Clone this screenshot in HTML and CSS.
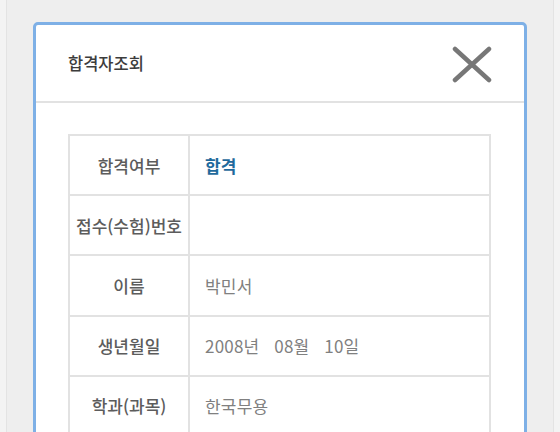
FILE: index.html
```html
<!DOCTYPE html>
<html lang="ko">
  <head>
    <title>합격자조회</title>
    <meta charset="utf-8">
    <meta name="viewport" content="width=device-width, initial-scale=1.0">
    <link rel="stylesheet" href="styles.css">
  </head>
  <body>
    <div class="page">
      <!-- Result Modal -->
      <div class="modal">
        <div class="modal-header">
          <h3>합격자조회</h3>
          <button class="close-button" aria-label="닫기">
            <svg width="40" height="37" viewBox="0 0 40 37">
              <line x1="3" y1="3" x2="37" y2="34" />
              <line x1="37" y1="3" x2="3" y2="34" />
            </svg>
          </button>
        </div>
        <div class="modal-body">
          <table class="result-table">
            <tr>
              <th>합격여부</th>
              <td class="pass">합격</td>
            </tr>
            <tr>
              <th>접수(수험)번호</th>
              <td></td>
            </tr>
            <tr>
              <th>이름</th>
              <td>박민서</td>
            </tr>
            <tr>
              <th>생년월일</th>
              <td>2008년&nbsp;&nbsp;&nbsp;08월&nbsp;&nbsp;&nbsp;10일</td>
            </tr>
            <tr>
              <th>학과(과목)</th>
              <td>한국무용</td>
            </tr>
          </table>
        </div>
      </div>
    </div>
  </body>
</html>
```

FILE: styles.css
```css
* {
  margin: 0;
  padding: 0;
  box-sizing: border-box;
}

:root {
  --page-bg: #eeeeee;
  --modal-border: #7eb0e6;
  --line: #e2e2e2;
  --text-title: #3c3c3c;
  --text-label: #5c5c5c;
  --text-value: #808080;
  --accent-blue: #1f6a9c;
}

body {
  font-family: "Noto Sans CJK KR", "Noto Sans", sans-serif;
  background: #f3f3f3;
  height: 432px;
  overflow: hidden;
}

.page {
  margin: 0 6px;
  height: 100%;
  background: var(--page-bg);
  border-left: 1px solid #e3e3e3;
  border-right: 1px solid #e3e3e3;
  padding: 22px 26px 0;
}

.modal {
  background: #ffffff;
  border: 3px solid var(--modal-border);
  border-radius: 5px;
}

.modal-header {
  height: 78px;
  display: flex;
  align-items: center;
  justify-content: space-between;
  padding: 0 32px;
  border-bottom: 2px solid var(--line);
}

.modal-header h3 {
  font-size: 16.5px;
  font-weight: 500;
  color: var(--text-title);
}

.close-button {
  background: none;
  border: none;
  display: flex;
  margin-top: 2px;
  cursor: pointer;
}

.close-button line {
  stroke: #777777;
  stroke-width: 4.5;
  stroke-linecap: round;
}

.modal-body {
  padding: 31px 33px 40px 32px;
}

.result-table {
  width: 100%;
  border-collapse: collapse;
  font-size: 17px;
}

.result-table th,
.result-table td {
  border: 2px solid var(--line);
  height: 60.2px;
}

.result-table th {
  width: 120px;
  font-weight: 500;
  color: var(--text-label);
  text-align: center;
}

.result-table td {
  color: var(--text-value);
  text-align: left;
  padding-left: 15px;
  letter-spacing: 0.2px;
}

.result-table td.pass {
  color: var(--accent-blue);
  font-weight: 700;
}
```
